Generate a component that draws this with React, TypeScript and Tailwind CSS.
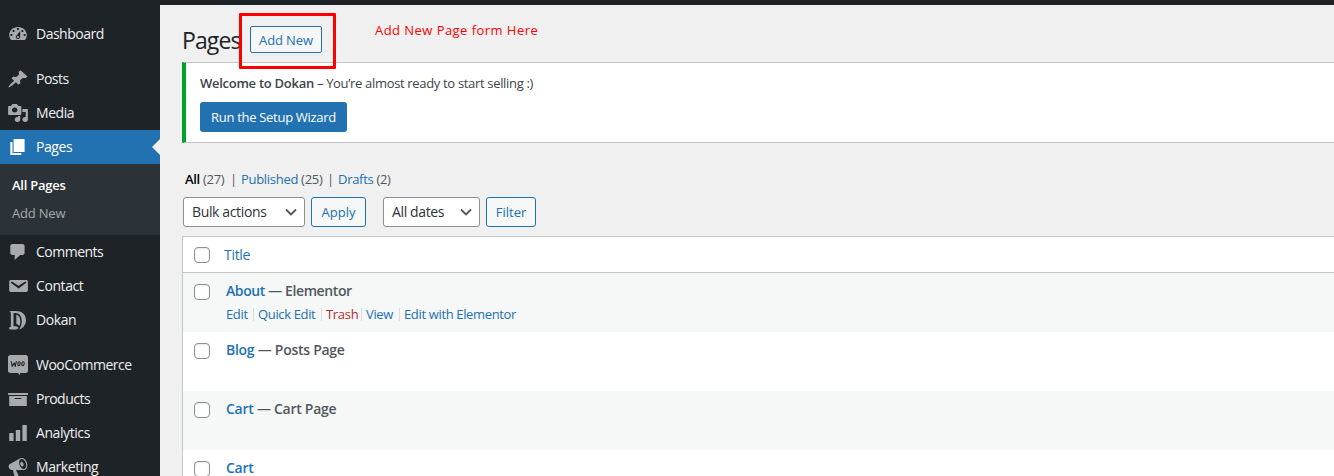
import React from "react";

const icons = {
  dashboard:
    "M3.76 16h12.48c1.1-1.37 1.76-3.11 1.76-5 0-4.42-3.58-8-8-8s-8 3.58-8 8c0 1.89.66 3.63 1.76 5zM10 4c.55 0 1 .45 1 1s-.45 1-1 1-1-.45-1-1 .45-1 1-1zM6 6c.55 0 1 .45 1 1s-.45 1-1 1-1-.45-1-1 .45-1 1-1zm8 0c.55 0 1 .45 1 1s-.45 1-1 1-1-.45-1-1 .45-1 1-1zm-5.37 5.55L12 7v6c0 1.1-.9 2-2 2s-2-.9-2-2c0-.57.24-1.08.63-1.45zM4 10c.55 0 1 .45 1 1s-.45 1-1 1-1-.45-1-1 .45-1 1-1zm12 0c.55 0 1 .45 1 1s-.45 1-1 1-1-.45-1-1 .45-1 1-1zm-5 3c0-.55-.45-1-1-1s-1 .45-1 1 .45 1 1 1 1-.45 1-1z",
  post: "M10.44 3.02l1.82-1.82 6.36 6.35-1.83 1.82c-1.05-.68-2.48-.57-3.41.36l-.75.75c-.92.93-1.04 2.35-.35 3.41l-1.83 1.82-2.41-2.41-2.8 2.79c-.42.42-3.38 2.71-3.8 2.29s1.86-3.39 2.28-3.81l2.79-2.79L4.1 9.36l1.83-1.82c1.05.69 2.48.57 3.4-.36l.75-.75c.93-.92 1.05-2.35.36-3.41z",
  media:
    "M13 11V4c0-.55-.45-1-1-1h-1.67L9 1H5L3.67 3H2c-.55 0-1 .45-1 1v7c0 .55.45 1 1 1h10c.55 0 1-.45 1-1zM7 4.5c1.38 0 2.5 1.12 2.5 2.5S8.38 9.5 7 9.5 4.5 8.38 4.5 7 5.62 4.5 7 4.5zM14 6h5v10.5c0 1.38-1.12 2.5-2.5 2.5S14 17.88 14 16.5s1.12-2.5 2.5-2.5c.17 0 .34.02.5.05V9h-3V6zm-4 8.05V13h2v3.5c0 1.38-1.12 2.5-2.5 2.5S7 17.88 7 16.5 8.12 14 9.5 14c.17 0 .34.02.5.05z",
  page: "M6 15V2h10v13H6zm-1 1h8v2H3V5h2v11z",
  comments: "M5 2h9c1.1 0 2 .9 2 2v7c0 1.1-.9 2-2 2h-2l-5 5v-5H5c-1.1 0-2-.9-2-2V4c0-1.1.9-2 2-2z",
  email:
    "M3.87 4h13.25C18.37 4 19 4.59 19 5.79v8.42c0 1.19-.63 1.79-1.88 1.79H3.87c-1.25 0-1.88-.6-1.88-1.79V5.79c0-1.2.63-1.79 1.88-1.79zm6.62 8.6l6.74-5.53c.24-.2.43-.66.13-1.07-.29-.41-.82-.42-1.17-.17l-5.7 3.86L4.8 5.83c-.35-.25-.88-.24-1.17.17-.3.41-.11.87.13 1.07z",
  dokan:
    "M2.2 1h5.600C13.700 1 17.200 4.300 17.200 10.200c0 4.600-2.400 7.900-6.300 9.300 1.700-2.100 2.500-5.200 2.500-8.700C13.400 5.700 11.200 2.900 7.400 2.900L5.900 2.900V16.300h1.500c2 .1 2.800 .6 3 1.700L8.700 19.500H3.200c-.9 0-1.300-.6-1.300-1.200 0-.8.6-1.300 1.600-1.500V3.200C3.400 2.200 3.000 1.500 2.200 1zM8.500 4.400c2.200.9 3.600 3.100 3.600 6.300 0 2.400-.4 4.300-1.100 5.800C10.700 14.800 9.800 14.400 8.500 14z",
  archive: "M19 4v2H1V4h18zM2 7h16v10H2V7zm11 3V9H7v1h6z",
  chart: "M18 18V2h-4v16h4zm-6 0V7H8v11h4zm-6 0v-8H2v8h4z",
  megaphone:
    "M18.15 5.94c.46 1.62.38 3.22-.02 4.48-.42 1.28-1.26 2.18-2.3 2.48-.16.06-.26.06-.4.06-.06.02-.12.02-.18.02-.06.02-.14.02-.22.02h-6.8l2.22 5.5c.02.14-.06.26-.14.34-.08.1-.24.16-.34.16H6.95c-.1 0-.26-.06-.34-.16-.08-.08-.16-.2-.14-.34l-1-5.500H4.250l-.02-.02c-.5.06-1.08-.18-1.54-.62s-.88-1.08-1.06-1.88c-.24-.8-.2-1.56-.02-2.2.18-.62.58-1.08 1.06-1.3l.02-.02 9-5.4c.1-.06.18-.1.24-.16.06-.04.14-.08.24-.12.16-.08.28-.12.5-.18 1.04-.3 2.24.1 3.22.98s1.84 2.24 2.26 3.86zm-2.58 5.98h-.02c.4-.1.74-.34 1.04-.7.58-.7.86-1.76.86-3.04 0-.64-.1-1.3-.28-1.98-.34-1.36-1.02-2.5-1.78-3.24s-1.68-1.1-2.46-.88c-.82.22-1.4.96-1.7 2-.32 1.04-.28 2.36.06 3.72.38 1.36 1 2.5 1.8 3.24.78.74 1.62 1.1 2.48.88zm-2.54-7.08c.22-.04.42-.02.62.04.38.16.76.48 1.02 1s.42 1.2.42 1.78c0 .3-.04.56-.12.8-.18.48-.44.84-.86.94-.34.1-.8-.06-1.14-.4s-.64-.86-.78-1.500c-.18-.62-.12-1.24.02-1.72s.48-.84.82-.94z",
};

function WooIcon() {
  return (
    <svg className="ml-[7px] h-5 w-[22px] shrink-0" viewBox="0 0 22 20">
      <path
        fill="#a7aaad"
        d="M3.500 0h15A2.500 2.500 0 0 1 21 2.500v13a2.500 2.500 0 0 1-2.500 2.500H13v2l-2.300-2H3.500A2.500 2.500 0 0 1 1 15.500v-13A2.500 2.500 0 0 1 3.500 0z"
      />
      <g fill="none" stroke="#1d2327" strokeWidth="1.1" strokeLinecap="round" strokeLinejoin="round">
        <path d="M4.200 6.500l1 5 2-3.600 1 3.600L9.300 6.500" />
        <ellipse cx="12" cy="8.700" rx="1.200" ry="2" transform="rotate(12 12 8.700)" />
        <ellipse cx="16" cy="8.700" rx="1.200" ry="2" transform="rotate(12 16 8.700)" />
      </g>
    </svg>
  );
}

type ItemProps = { icon?: keyof typeof icons; label: string; track?: string; active?: boolean };

function MenuItem({ icon, label, track = "tracking-[-0.42px]", active }: ItemProps) {
  return (
    <li
      className={`relative flex h-[34px] shrink-0 items-center text-[14px] ${
        active ? "bg-[#2271b1] text-white" : "text-[#f0f0f1]"
      }`}
    >
      {icon ? (
        <svg
          className={`ml-[7px] h-5 w-[22px] shrink-0 ${active ? "fill-white" : "fill-[#a7aaad]"}`}
          viewBox="0 0 20 20"
          preserveAspectRatio="none"
          fillRule="evenodd"
        >
          <path d={icons[icon]} />
        </svg>
      ) : (
        <WooIcon />
      )}
      <span className={`ml-[7px] pb-[2px] whitespace-nowrap ${track}`}>{label}</span>
      {active && (
        <span className="absolute top-[9px] right-0 border-y-8 border-r-8 border-y-transparent border-r-[#f0f0f1]" />
      )}
    </li>
  );
}

function Sidebar() {
  return (
    <nav className="h-[476px] w-40 shrink-0 overflow-hidden bg-[#1d2327] pt-[17px]">
      <ul className="flex flex-col">
        <MenuItem icon="dashboard" label="Dashboard" track="tracking-[-0.5px]" />
        <li className="h-[11px] shrink-0" />
        <MenuItem icon="post" label="Posts" track="tracking-[-0.5px]" />
        <MenuItem icon="media" label="Media" />
        <MenuItem icon="page" label="Pages" active />
        <li className="flex h-[71px] shrink-0 flex-col bg-[#2c3338] pt-[7px] pl-3 text-[13px] leading-7">
          <span className="font-semibold tracking-[-0.25px] text-white">All Pages</span>
          <span className="tracking-[-0.2px] text-[#a7aaad]">Add New</span>
        </li>
        <MenuItem icon="comments" label="Comments" track="tracking-[-0.5px]" />
        <MenuItem icon="email" label="Contact" />
        <MenuItem icon="dokan" label="Dokan" />
        <li className="h-[11px] shrink-0" />
        <MenuItem label="WooCommerce" track="tracking-[-0.5px]" />
        <MenuItem icon="archive" label="Products" track="tracking-[-0.5px]" />
        <MenuItem icon="chart" label="Analytics" />
        <MenuItem icon="megaphone" label="Marketing" />
      </ul>
    </nav>
  );
}

function Select({ label, width }: { label: string; width: string }) {
  return (
    <div
      className={`flex h-[30px] items-center justify-between rounded-[3px] border border-[#8c8f94] bg-white pr-[7px] pl-2 text-[14px] tracking-[-0.36px] text-[#2c3338] ${width}`}
    >
      <span className="pb-px whitespace-nowrap">{label}</span>
      <svg className="h-3 w-3 shrink-0" viewBox="0 0 12 12" fill="none" stroke="#50575e" strokeWidth="1.8">
        <path d="M1 3.500l5 5 5-5" />
      </svg>
    </div>
  );
}

function Button({ label, width }: { label: string; width: string }) {
  return (
    <button
      className={`h-[30px] rounded-[3px] border border-[#2271b1] bg-[#f6f7f7] text-[13px] leading-[29px] whitespace-nowrap text-[#2271b1] ${width}`}
    >
      {label}
    </button>
  );
}

function Checkbox() {
  return (
    <span className="ml-[11px] block h-4 w-4 shrink-0 rounded-[4px] border border-[#8c8f94] bg-white shadow-[inset_0_1px_2px_rgba(0,0,0,0.1)]" />
  );
}

type RowProps = {
  title: string;
  state?: string;
  track?: string;
  striped?: boolean;
  children?: React.ReactNode;
};

function Row({ title, state, track = "tracking-[-0.27px]", striped, children }: RowProps) {
  return (
    <div className={`flex h-[59px] shrink-0 pt-[11px] ${striped ? "bg-[#f6f7f7]" : "bg-white"}`}>
      <Checkbox />
      <div className="ml-4 -mt-[2px]">
        <div className={`text-[14px] leading-[18px] font-semibold whitespace-nowrap text-[#50575e] ${track}`}>
          <span className="text-[#2271b1]">{title}</span>
          {state && (
            <>
              {" "}
              <span className="font-normal">—</span> {state}
            </>
          )}
        </div>
        {children}
      </div>
    </div>
  );
}

function Divider() {
  return <span className="mt-[3px] h-[13px] w-px bg-[#dcdcde]" />;
}

function RowActions() {
  return (
    <div className="mt-[5px] flex text-[13px] leading-[18px] tracking-[-0.35px] whitespace-nowrap text-[#2271b1]">
      <span className="w-[27px]">Edit</span>
      <Divider />
      <span className="ml-[4px] w-[63px]">Quick Edit</span>
      <Divider />
      <span className="ml-[4px] w-[35px] tracking-[-0.6px] text-[#b32d2e]">
        <span className="tracking-[-0.3px]">Trash</span>
      </span>
      <Divider />
      <span className="ml-[4px] w-[33px]">View</span>
      <Divider />
      <span className="ml-[4px]">Edit with Elementor</span>
    </div>
  );
}

export default function App() {
  return (
    <div className="flex h-[476px] w-[1334px] overflow-hidden bg-[#f0f0f1] font-['Open_Sans','Noto_Sans',sans-serif]">
      <Sidebar />
      <main className="flex min-w-0 flex-1 flex-col">
        <div className="h-[5px] shrink-0 bg-[#1d2327]" />
        <header className="relative flex h-[57px] shrink-0 pl-[22px]">
          <h1 className="mt-[19px] w-[68px] text-[23px] leading-8 tracking-[-0.9px] text-[#1d2327]">Pages</h1>
          <button className="mt-[21px] h-[27px] w-[72px] rounded-[2px] border border-[#2271b1] bg-[#f6f7f7] text-[13px] leading-[27px] font-medium tracking-[-0.1px] text-[#2271b1]">
            Add New
          </button>
          <span className="mt-[16px] ml-[53px] text-[13px] leading-[18px] tracking-[0.45px] whitespace-nowrap text-[#ff0000]">
            Add New Page form Here
          </span>
          <div className="absolute top-2 left-[79px] h-[56px] w-[97px] rounded-[1px] border-[3px] border-[#ff0000]" />
        </header>
        <section className="ml-[22px] h-[81px] shrink-0 border-y border-l-4 border-y-[#c3c4c7] border-l-[#00a32a] bg-white pt-[10px] pl-[14px] text-[13px] text-[#3c434a]">
          <p className="leading-5 tracking-[-0.33px]">
            <b className="font-semibold tracking-[-0.27px]">Welcome to Dokan</b> – You’re almost ready to start
            selling :)
          </p>
          <button className="mt-[9px] h-[30px] w-[147px] rounded-[3px] bg-[#2271b1] text-[13px] leading-[31px] font-medium tracking-[-0.3px] text-white">
            Run the Setup Wizard
          </button>
        </section>
        <div className="mt-[26px] flex h-5 shrink-0 pl-[25px] text-[13px] leading-5 tracking-[-0.3px] whitespace-nowrap text-[#50575e]">
          <span className="w-[46px]">
            <b className="font-semibold text-black">All</b> (27)
          </span>
          <span className="w-[10px] -translate-x-px">|</span>
          <span className="w-[87px]">
            <span className="text-[#2271b1]">Published</span> (25)
          </span>
          <span className="w-[10px] -translate-x-px">|</span>
          <span>
            <span className="text-[#2271b1]">Drafts</span> (2)
          </span>
        </div>
        <div className="mt-2 flex h-[30px] shrink-0 pl-[23px]">
          <Select label="Bulk actions" width="w-[122px]" />
          <div className="mr-[17px] ml-[6px]">
            <Button label="Apply" width="w-[55px]" />
          </div>
          <Select label="All dates" width="w-[97px]" />
          <div className="ml-[6px]">
            <Button label="Filter" width="w-[50px]" />
          </div>
        </div>
        <section className="mt-[9px] ml-[22px] flex h-[240px] shrink-0 flex-col overflow-hidden border-t border-l border-[#c3c4c7] bg-white">
          <div className="flex h-9 shrink-0 items-center border-b border-[#c3c4c7] text-[14px] text-[#2271b1]">
            <Checkbox />
            <span className="ml-[14px] tracking-[-0.3px]">Title</span>
          </div>
          <Row title="About" state="Elementor" track="tracking-[-0.4px]" striped>
            <RowActions />
          </Row>
          <Row title="Blog" state="Posts Page" />
          <Row title="Cart" state="Cart Page" striped />
          <Row title="Cart" />
        </section>
      </main>
    </div>
  );
}
